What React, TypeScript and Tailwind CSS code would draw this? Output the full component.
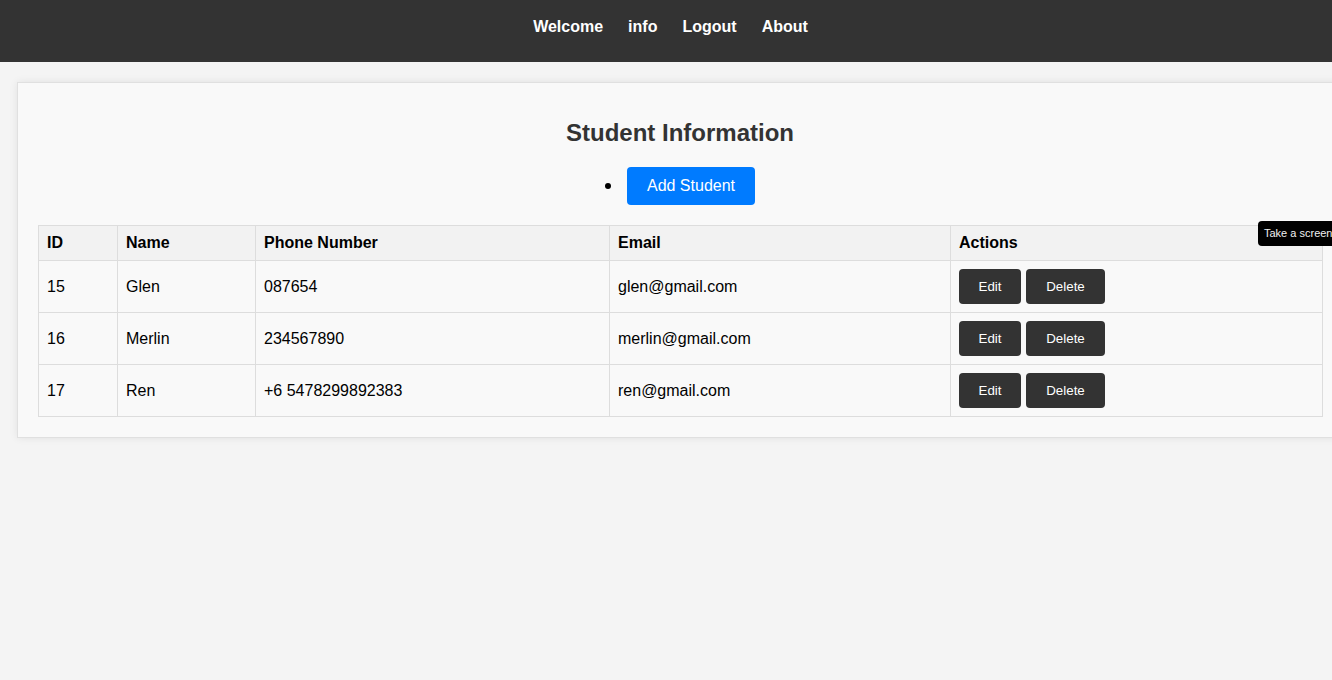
import React from "react";

const rows = [
  { id: 15, name: "Glen", phone: "087654", email: "glen@gmail.com" },
  { id: 16, name: "Merlin", phone: "234567890", email: "merlin@gmail.com" },
  { id: 17, name: "Ren", phone: "+6 5478299892383", email: "ren@gmail.com" },
];

export default function App() {
  return (
    <div
      className="relative min-h-screen w-full overflow-hidden bg-[#f4f4f4] text-black"
      style={{ fontFamily: '"Liberation Sans", Arial, sans-serif' }}
    >
      <nav className="flex h-[62px] items-center justify-center gap-[25px] bg-[#333] pb-[17px] pt-[9px] pl-[9px]">
        {["Welcome", "info", "Logout", "About"].map((l) => (
          <a key={l} className="text-[16px] font-bold leading-[18px] text-white">
            {l}
          </a>
        ))}
      </nav>

      <div className="ml-[17px] mt-[20px] w-[1326px] border border-[#e0e0e0] bg-[#f9f9f9] px-5 pb-5 pt-[36px] shadow-[0_0_8px_rgba(0,0,0,0.08)]">
        <h2 className="text-center text-[24px] font-bold leading-[28px] text-[#333]">
          Student Information
        </h2>
        <div className="mt-[20px] flex items-center justify-center gap-[16px]">
          <span className="h-[6px] w-[6px] rounded-full bg-black" />
          <button className="h-[38px] w-[128px] rounded-[4px] bg-[#007bff] text-[16px] text-white">
            Add Student
          </button>
        </div>
        <table className="mt-5 w-[1284px] table-fixed border-collapse text-[16px]">
          <colgroup>
            <col className="w-[79px]" />
            <col className="w-[138px]" />
            <col className="w-[354px]" />
            <col className="w-[341px]" />
            <col className="w-[372px]" />
          </colgroup>
          <thead>
            <tr className="h-[35px] bg-[#f2f2f2]">
              {["ID", "Name", "Phone Number", "Email", "Actions"].map((h) => (
                <th key={h} className="border border-[#ddd] px-2 text-left font-bold">
                  {h}
                </th>
              ))}
            </tr>
          </thead>
          <tbody>
            {rows.map((r) => (
              <tr key={r.id} className="h-[52px]">
                <td className="border border-[#ddd] px-2">{r.id}</td>
                <td className="border border-[#ddd] px-2">{r.name}</td>
                <td className="border border-[#ddd] px-2">{r.phone}</td>
                <td className="border border-[#ddd] px-2">{r.email}</td>
                <td className="border border-[#ddd] px-2">
                  <div className="flex gap-[5px]">
                    <button className="h-[35px] w-[62px] rounded-[4px] bg-[#333] text-[13.33px] text-white">
                      Edit
                    </button>
                    <button className="h-[35px] w-[79px] rounded-[4px] bg-[#333] text-[13.33px] text-white">
                      Delete
                    </button>
                  </div>
                </td>
              </tr>
            ))}
          </tbody>
        </table>
      </div>

      <div className="absolute left-[1258px] top-[221px] flex h-[25px] items-center whitespace-nowrap rounded-[4px] bg-black pl-[6px] pr-3 text-[11px] text-[#f0f0f0]">
        Take a screenshot
      </div>
    </div>
  );
}
